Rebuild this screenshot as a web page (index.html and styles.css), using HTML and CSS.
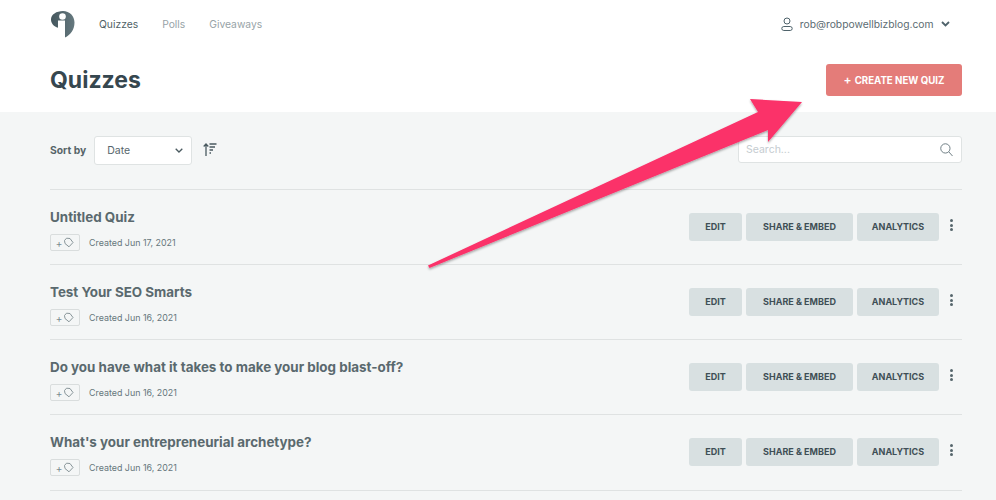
FILE: index.html
```html
<!DOCTYPE html>
<html lang="en">
<head>
<meta charset="utf-8">
<title>Quizzes</title>
<link rel="stylesheet" href="styles.css">
</head>
<body>
<header class="header">
  <div class="topbar">
    <svg class="logo" width="24" height="27" viewBox="0 0 24 27"><defs><linearGradient id="logo-fill" x1="0" y1="0" x2="1" y2="0"><stop offset="0" stop-color="#44565d"/><stop offset="1" stop-color="#66797f"/></linearGradient></defs><path fill="url(#logo-fill)" d="M12 0C18.600 0 23.500 5 23.500 11.500C23.500 18.500 19.500 24 14 26.500V9.500H7V16.800C3 15.500 0 12.500 0 8.500C0 3.500 5.500 0 12 0Z"/><circle cx="11.500" cy="5.500" r="3.300" fill="#fff"/></svg>
    <nav class="nav">
      <a class="nav-link active">Quizzes</a>
      <a class="nav-link">Polls</a>
      <a class="nav-link">Giveaways</a>
    </nav>
    <div class="user">
      <svg width="12" height="14" viewBox="0 0 12 14" fill="none" stroke="#4f636b" stroke-width="1"><circle cx="6" cy="4" r="3"/><rect x=".8" y="9.500" width="10.400" height="4" rx="2"/></svg>
      <span>rob@robpowellbizblog.com</span>
      <svg width="9" height="6" viewBox="0 0 9 6" fill="none" stroke="#4f636b" stroke-width="1.800"><path d="M1 1l3.500 3.500L8 1"/></svg>
    </div>
  </div>
  <div class="titlebar">
    <h1 class="title">Quizzes</h1>
    <button class="create"><span class="plus">+</span>CREATE NEW QUIZ</button>
  </div>
</header>
<main class="main">
  <div class="toolbar">
    <span class="sort-label">Sort by</span>
    <div class="select">
      <span>Date</span>
      <svg width="8" height="5" viewBox="0 0 8 5" fill="none" stroke="#4a5a60" stroke-width="1.300"><path d="M.7.7L4 4 7.300.7"/></svg>
    </div>
    <svg class="sort-icon" width="14" height="13" viewBox="0 0 14 13" fill="none" stroke="#4a5a60" stroke-width="1.300"><path d="M3 13V1M.7 3.500L3 1l2.300 2.500M6.500 1H13.500M6.500 4H12M6.500 7H10M6.500 10H8"/></svg>
    <div class="search">
      <span>Search...</span>
      <svg width="13" height="14" viewBox="0 0 14 15" fill="none" stroke="#66767c" stroke-width="1"><circle cx="5.800" cy="5.800" r="5"/><path d="M9.500 9.500L13.500 14"/></svg>
    </div>
  </div>
  <section class="list">
    <article class="row">
      <div class="info">
        <h2 class="quiz-name">Untitled Quiz</h2>
        <div class="meta"><span class="tag">+<svg width="11" height="11" viewBox="0 0 11 11" fill="none" stroke="#7c8a8f" stroke-width=".9" stroke-linejoin="round"><path d="M1.500 3.500L3.500 1.200 7 1.500 10 5.500 6 9.800 2 6.500z"/></svg></span><span>Created Jun 17, 2021</span></div>
      </div>
      <div class="actions"><button class="btn btn-edit">EDIT</button><button class="btn btn-share">SHARE &amp; EMBED</button><button class="btn btn-analytics">ANALYTICS</button><span class="more"><i></i><i></i><i></i></span></div>
    </article>
    <article class="row">
      <div class="info">
        <h2 class="quiz-name">Test Your SEO Smarts</h2>
        <div class="meta"><span class="tag">+<svg width="11" height="11" viewBox="0 0 11 11" fill="none" stroke="#7c8a8f" stroke-width=".9" stroke-linejoin="round"><path d="M1.500 3.500L3.500 1.200 7 1.500 10 5.500 6 9.800 2 6.500z"/></svg></span><span>Created Jun 16, 2021</span></div>
      </div>
      <div class="actions"><button class="btn btn-edit">EDIT</button><button class="btn btn-share">SHARE &amp; EMBED</button><button class="btn btn-analytics">ANALYTICS</button><span class="more"><i></i><i></i><i></i></span></div>
    </article>
    <article class="row">
      <div class="info">
        <h2 class="quiz-name">Do you have what it takes to make your blog blast-off?</h2>
        <div class="meta"><span class="tag">+<svg width="11" height="11" viewBox="0 0 11 11" fill="none" stroke="#7c8a8f" stroke-width=".9" stroke-linejoin="round"><path d="M1.500 3.500L3.500 1.200 7 1.500 10 5.500 6 9.800 2 6.500z"/></svg></span><span>Created Jun 16, 2021</span></div>
      </div>
      <div class="actions"><button class="btn btn-edit">EDIT</button><button class="btn btn-share">SHARE &amp; EMBED</button><button class="btn btn-analytics">ANALYTICS</button><span class="more"><i></i><i></i><i></i></span></div>
    </article>
    <article class="row">
      <div class="info">
        <h2 class="quiz-name">What's your entrepreneurial archetype?</h2>
        <div class="meta"><span class="tag">+<svg width="11" height="11" viewBox="0 0 11 11" fill="none" stroke="#7c8a8f" stroke-width=".9" stroke-linejoin="round"><path d="M1.500 3.500L3.500 1.200 7 1.500 10 5.500 6 9.800 2 6.500z"/></svg></span><span>Created Jun 16, 2021</span></div>
      </div>
      <div class="actions"><button class="btn btn-edit">EDIT</button><button class="btn btn-share">SHARE &amp; EMBED</button><button class="btn btn-analytics">ANALYTICS</button><span class="more"><i></i><i></i><i></i></span></div>
    </article>
  </section>
</main>
<svg class="arrow" width="996" height="500" viewBox="0 0 996 500">
  <defs><filter id="arrow-shadow" x="-5%" y="-5%" width="110%" height="110%"><feDropShadow dx="0" dy="1.500" stdDeviation="1.200" flood-color="#000" flood-opacity=".35"/></filter></defs>
  <path fill="#fb3069" filter="url(#arrow-shadow)" d="M802 102L768 142L768 130L429.500 268L428 265.500L758 112L750 99Z"/>
</svg>
</body>
</html>
```

FILE: styles.css
```css
* { box-sizing: border-box; }
html, body { margin: 0; padding: 0; }
body {
  width: 996px;
  height: 500px;
  overflow: hidden;
  position: relative;
  background: #f4f6f6;
  font-family: "Inter", "Liberation Sans", sans-serif;
  color: #4f5f65;
}
.header { background: #fff; height: 112px; padding: 0 34px 0 51px; }
.topbar { display: flex; align-items: center; height: 48px; }
.logo { margin-right: 24px; }
.nav { display: flex; gap: 24px; font-size: 10.300px; }
.nav-link { color: #97a3a7; }
.nav-link.active { color: #4f5f65; }
.user { margin-left: auto; padding-right: 12px; display: flex; align-items: center; font-size: 10.300px; color: #5c6c72; }
.user span { margin: 0 7.500px 0 7px; }
.titlebar { display: flex; align-items: center; justify-content: space-between; height: 48px; margin: 8px 0 0 -1px; }
.title { margin: 0; font-size: 23px; font-weight: 700; color: #36474f; line-height: 48px; }
.create {
  width: 136px; height: 32px; border: 0; border-radius: 3px;
  background: #e47c79; color: #fff; font: 700 9.700px "Inter", sans-serif; padding: 0 0 2px;
}
.plus { font-size: 12px; font-weight: 600; margin-right: 3px; }
.main { padding: 0 34px 0 50px; }
.toolbar { display: flex; align-items: center; height: 77px; }
.sort-label { font-size: 10.300px; font-weight: 700; color: #566469; margin: -2px 8px 0 0; }
.select {
  width: 98px; height: 29px; background: #fff; border: 1px solid #dfe3e3; border-radius: 3px;
  display: flex; align-items: center; justify-content: space-between;
  padding: 0 8px 0 12px; font-size: 10.500px; color: #56666c;
}
.sort-icon { margin-left: 11px; margin-top: -3px; }
.search {
  margin: -2px 0 0 auto; width: 224px; height: 27px; background: #fff; border: 1px solid #dfe3e3; border-radius: 3px;
  display: flex; align-items: center; justify-content: space-between;
  padding: 0 8px 0 7px; font-size: 10.500px; color: #c5ccd0;
}
.list { border-top: 1px solid #dfe2e2; }
.row { height: 75px; border-bottom: 1px solid #dfe2e2; display: flex; align-items: flex-start; justify-content: space-between; }
.row:last-child { height: 76px; }
.quiz-name { margin: 18px 0 7px; font-size: 13.400px; line-height: 18px; font-weight: 700; color: #5a696e; }
.meta { display: flex; align-items: center; gap: 9px; font-size: 8.900px; color: #66767c; }
.tag {
  width: 30px; height: 17px; margin-top: 1px; border: 1px solid #d9dddd; border-radius: 2px;
  display: flex; align-items: center; justify-content: center; gap: 1px; color: #7c8a8f; font-size: 10px;
}
.actions { display: flex; align-items: center; gap: 4px; margin-top: 23px; position: relative; padding-right: 23px; }
.btn {
  height: 28px; border: 0; border-radius: 3px; background: #d8e0e1; color: #3f4f56;
  font: 700 9px "Inter", sans-serif; padding: 0 0 2px;
}
.btn-edit { width: 53px; }
.btn-share { width: 107px; }
.btn-analytics { width: 82px; }
.more { position: absolute; right: 9px; top: 6px; display: flex; flex-direction: column; gap: 1.500px; }
.more i { display: block; width: 3px; height: 3px; border-radius: 50%; background: #56666c; }
.arrow { position: absolute; left: 0; top: 0; pointer-events: none; }
```
